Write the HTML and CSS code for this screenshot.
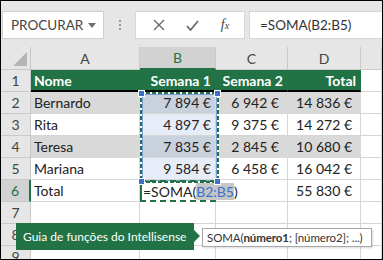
FILE: index.html
```html
<!DOCTYPE html>
<html lang="pt">
<head>
  <meta charset="UTF-8">
  <title>SOMA - Intellisense</title>
  <link rel="stylesheet" href="styles.css">
</head>
<body>

  <div class="window">
    <div class="formula-bar">
      <div class="name-box">
        <span>PROCURAR</span>
        <svg class="caret" width="8" height="5" viewBox="0 0 8 5"><path d="M0 0h8L4 5z" fill="#6f6f6f"/></svg>
      </div>
      <div class="grip"><i></i><i></i><i></i></div>
      <div class="fn-buttons">
        <svg width="12" height="12" viewBox="0 0 12 12"><path d="M1 1l10 10M11 1L1 11" stroke="#6a6a6a" stroke-width="1.4" fill="none"/></svg>
        <svg width="13" height="11" viewBox="0 0 13 11"><path d="M1 6l3.5 4L12 1" stroke="#6a6a6a" stroke-width="1.8" fill="none"/></svg>
        <span class="fx">f<small>x</small></span>
      </div>
      <div class="formula-input">=SOMA(B2:B5)</div>
    </div>

    <div class="sheet">
      <div class="hd corner"><svg width="14" height="14" viewBox="0 0 14 14"><path d="M14 0v14H0z" fill="#b5b5b5"/></svg></div>
      <div class="hd">A</div>
      <div class="hd active-col">B</div>
      <div class="hd">C</div>
      <div class="hd">D</div>
      <div class="hd"></div>

      <div class="rh">1</div>
      <div class="c title">Nome</div>
      <div class="c title num">Semana 1</div>
      <div class="c title num">Semana 2</div>
      <div class="c title num">Total</div>
      <div class="c"></div>

      <div class="rh">2</div>
      <div class="c band">Bernardo</div>
      <div class="c band sel num">7&nbsp;894&nbsp;€</div>
      <div class="c band num val">6&nbsp;942&nbsp;€</div>
      <div class="c band num val">14&nbsp;836&nbsp;€</div>
      <div class="c"></div>

      <div class="rh">3</div>
      <div class="c">Rita</div>
      <div class="c sel num">4&nbsp;897&nbsp;€</div>
      <div class="c num val">9&nbsp;375&nbsp;€</div>
      <div class="c num val">14&nbsp;272&nbsp;€</div>
      <div class="c"></div>

      <div class="rh">4</div>
      <div class="c band">Teresa</div>
      <div class="c band sel num">7&nbsp;835&nbsp;€</div>
      <div class="c band num val">2&nbsp;845&nbsp;€</div>
      <div class="c band num val">10&nbsp;680&nbsp;€</div>
      <div class="c"></div>

      <div class="rh">5</div>
      <div class="c">Mariana</div>
      <div class="c sel num">9&nbsp;584&nbsp;€</div>
      <div class="c num val">6&nbsp;458&nbsp;€</div>
      <div class="c num val">16&nbsp;042&nbsp;€</div>
      <div class="c"></div>

      <div class="rh active-row">6</div>
      <div class="c">Total</div>
      <div class="c editing">=SOMA(<span class="ref">B2:B5</span><span class="cursor"></span>)</div>
      <div class="c"></div>
      <div class="c num val">55&nbsp;830&nbsp;€</div>
      <div class="c"></div>

      <div class="rh">7</div>
      <div class="c"></div><div class="c"></div><div class="c"></div><div class="c"></div><div class="c"></div>

      <div class="rh">8</div>
      <div class="c"></div><div class="c"></div><div class="c"></div><div class="c"></div><div class="c"></div>

      <div class="rh">9</div>
      <div class="c"></div><div class="c"></div><div class="c"></div><div class="c"></div><div class="c"></div>
    </div>

    <!-- intervalo B2:B5 com formiguinhas -->
    <div class="range">
      <i class="h tl"></i><i class="h tr"></i><i class="h bl"></i><i class="h br"></i>
    </div>

    <div class="callout">Guia de funções do Intellisense</div>
    <div class="tip">SOMA(<b>número1</b>; [número2]; ...)</div>
  </div>

</body>
</html>
```

FILE: styles.css
```css
* {
  box-sizing: border-box;
}

body {
  margin: 0;
  font-family: Lato, "Noto Sans", sans-serif;
  color: #222;
}

.window {
  position: relative;
  width: 383px;
  height: 260px;
  border: 1px solid #000;
  overflow: hidden;
  background: #fff;
}

/* barra de fórmulas */
.formula-bar {
  height: 46px;
  background: #e6e6e6;
  display: flex;
  align-items: flex-start;
  padding: 10px 0 0 1px;
}

.name-box {
  width: 102px;
  height: 28px;
  background: #fff;
  border: 1px solid #cfcfcf;
  display: flex;
  align-items: center;
  justify-content: space-between;
  padding: 0 7px 0 8px;
  font-size: 13.5px;
  color: #444;
}

.grip {
  width: 31px;
  height: 28px;
  display: flex;
  flex-direction: column;
  align-items: center;
  justify-content: center;
  gap: 2px;
}

.grip i {
  width: 2px;
  height: 2px;
  background: #9a9a9a;
}

.fn-buttons {
  width: 110px;
  height: 28px;
  background: #fff;
  border: 1px solid #d6d6d6;
  display: flex;
  align-items: center;
  justify-content: space-around;
  padding: 0 4px 0 6px;
}

.fx {
  font-family: "Liberation Serif", serif;
  font-style: italic;
  font-size: 14px;
  color: #444;
}

.fx small {
  font-size: 10px;
}

.formula-input {
  flex: 1;
  height: 28px;
  margin-left: 4px;
  background: #fff;
  border: 1px solid #d6d6d6;
  border-right: none;
  padding-left: 10px;
  font-size: 13.5px;
  line-height: 26px;
  color: #333;
}

/* planilha */
.sheet {
  display: grid;
  grid-template-columns: 30px 109px 76px 72px 73px 1fr;
  grid-template-rows: 23px repeat(9, 22px);
  font-size: 14px;
}

.hd,
.rh {
  background: #e6e6e6;
  color: #444;
  border-right: 1px solid #c9c9c9;
  border-bottom: 1px solid #c9c9c9;
  display: flex;
  align-items: center;
  justify-content: center;
}

.corner {
  justify-content: flex-end;
  align-items: flex-end;
  padding: 0 3px 3px 0;
}

.active-col {
  background: #d2d2d2;
  color: #217346;
  border-bottom: 2px solid #217346;
}

.active-row {
  background: #d2d2d2;
  color: #217346;
  border-right: 2px solid #217346;
}

.c {
  border-right: 1px solid #d6d6d6;
  border-bottom: 1px solid #d6d6d6;
  padding: 0 3px;
  display: flex;
  align-items: center;
  white-space: nowrap;
}

.num {
  justify-content: flex-end;
  padding-right: 4px;
}

.val {
  padding-right: 8px;
}

.title {
  background: #217346;
  color: #fff;
  font-weight: bold;
  border-right-color: #217346;
  border-bottom: 2px solid #000;
}

.band {
  background: #d9d9d9;
  border-color: #d9d9d9;
}

.sel {
  background: #e6edf8;
}

.band.sel {
  background: #c9d1dc;
}

.editing {
  position: relative;
  z-index: 1;
  border: 2px dashed #217346;
  border-left-style: solid;
  padding-left: 1px;
  overflow: visible;
}

.ref {
  color: #3c72c8;
  background: #c6c6c6;
}

.cursor {
  width: 1px;
  height: 16px;
  background: #000;
}

/* formiguinhas em volta de B2:B5 */
.range {
  position: absolute;
  left: 139px;
  top: 91px;
  width: 79px;
  height: 91px;
  background:
    repeating-linear-gradient(90deg, #217346 0 4px, #fff 4px 6px) top / 100% 2px no-repeat,
    repeating-linear-gradient(90deg, #217346 0 4px, #fff 4px 6px) bottom / 100% 2px no-repeat,
    repeating-linear-gradient(180deg, #217346 0 4px, #fff 4px 6px) left / 2px 100% no-repeat,
    repeating-linear-gradient(180deg, #217346 0 4px, #fff 4px 6px) right / 2px 100% no-repeat;
}

.range::after {
  content: "";
  position: absolute;
  inset: 2px;
  border: 1px solid #7d9fd9;
}

.range .h {
  position: absolute;
  width: 7px;
  height: 7px;
  background: #3f6fc6;
  border: 1px solid #fff;
  z-index: 2;
}

.h.tl { left: -2px; top: -2px; }
.h.tr { right: -2px; top: -2px; }
.h.bl { left: -2px; bottom: -2px; }
.h.br { right: -2px; bottom: -2px; }

/* balões */
.callout {
  position: absolute;
  left: 15px;
  top: 222px;
  width: 178px;
  height: 27px;
  background: #217346;
  color: #fff;
  font-size: 12px;
  line-height: 27px;
  padding-left: 7px;
  white-space: nowrap;
}

.callout::after {
  content: "";
  position: absolute;
  right: -6px;
  top: 7px;
  border-left: 6px solid #217346;
  border-top: 6px solid transparent;
  border-bottom: 6px solid transparent;
}

.tip {
  position: absolute;
  left: 201px;
  top: 227px;
  width: 170px;
  height: 19px;
  background: #fff;
  border: 1px solid #a8a8a8;
  box-shadow: 1px 1px 2px rgba(0,0,0,0.15);
  font-size: 11.5px;
  line-height: 17px;
  padding-left: 4px;
  color: #333;
  white-space: nowrap;
  letter-spacing: -0.1px;
}
```
